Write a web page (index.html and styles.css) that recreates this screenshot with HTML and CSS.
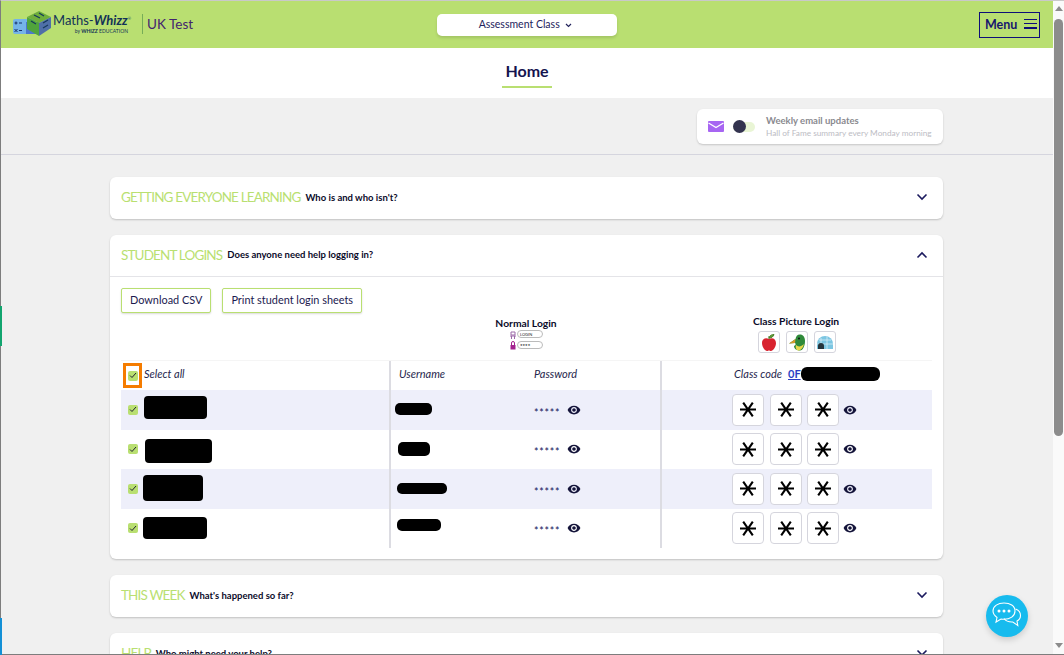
FILE: index.html
```html
<!DOCTYPE html>
<html lang="en">
<head>
    <meta charset="UTF-8">
    <title>Maths-Whizz UK Test</title>
    <link rel="stylesheet" href="styles.css">
</head>
<body>
    <div class="window">
        <span class="edge edge-green"></span>
        <span class="edge edge-blue"></span>
        <div class="page">
            <header class="topbar">
                <div class="brand">
                    <svg class="logo-mark" width="39" height="26" viewBox="0 0 39 26">
                        <rect x="0" y="8" width="22" height="15" rx="2" fill="#74b4e8"/>
                        <rect x="13" y="11" width="13" height="12" fill="#4a78cf"/>
                        <path d="M1.500 12h3M3 10.500v3M6 12h3M1.500 18l3 3M4.500 18l-3 3M6 19.500h3" stroke="#14306b" stroke-width="1" fill="none"/>
                        <path d="M14 6 L26 0 L38 6 L26 12 Z" fill="#6fae3c"/>
                        <path d="M14 6 L26 12 L26 25 L14 18 Z" fill="#50a43c"/>
                        <path d="M26 12 L38 6 L38 17 L26 25 Z" fill="#4f6fa8"/>
                        <path d="M21 4l6 3M26 2l5 3M18 10l5 3M30 12l5-3M30 17l5-3" stroke="#163a5c" stroke-width="1.300" fill="none"/>
                    </svg>
                    <div class="logo-text">
                        <div class="logo-name">Maths-<b>Whizz</b><sup>®</sup></div>
                        <div class="logo-by">by <b>WHIZZ</b> EDUCATION</div>
                    </div>
                    <div class="school">UK Test</div>
                </div>
                <button class="class-select">Assessment Class
                    <svg width="7" height="5" viewBox="0 0 7 5"><path d="M1 1l2.500 2.500L6 1" stroke="#23235c" stroke-width="1.200" fill="none"/></svg>
                </button>
                <button class="menu-button">Menu
                    <span class="burger"><i></i><i></i><i></i></span>
                </button>
            </header>

            <div class="title-bar">
                <h1>Home</h1>
            </div>

            <div class="content">
                <div class="email-row">
                    <div class="email-card">
                        <svg width="16" height="11" viewBox="0 0 16 11"><rect width="16" height="11" rx="1" fill="#a765f2"/><path d="M0.500 2l7.500 4.500L15.500 2" stroke="#fff" stroke-width="1.300" fill="none"/></svg>
                        <span class="toggle"><span class="toggle-knob"></span></span>
                        <div class="email-text">
                            <div class="email-title">Weekly email updates</div>
                            <div class="email-sub">Hall of Fame summary every Monday morning</div>
                        </div>
                    </div>
                </div>

                <div class="panels">
                    <section class="panel">
                        <div class="panel-head">
                            <span class="panel-title">GETTING EVERYONE LEARNING</span>
                            <span class="panel-question">Who is and who isn't?</span>
                            <svg class="chevron" width="12" height="8" viewBox="0 0 12 8"><path d="M1.500 1.500L6 6l4.500-4.500" stroke="#1b1a5e" stroke-width="1.600" fill="none"/></svg>
                        </div>
                    </section>

                    <section class="panel">
                        <div class="panel-head panel-head-open">
                            <span class="panel-title">STUDENT LOGINS</span>
                            <span class="panel-question">Does anyone need help logging in?</span>
                            <svg class="chevron" width="12" height="8" viewBox="0 0 12 8"><path d="M1.500 6.500L6 2l4.500 4.500" stroke="#1b1a5e" stroke-width="1.600" fill="none"/></svg>
                        </div>
                        <div class="panel-body">
                            <div class="actions">
                                <button class="outline-button">Download CSV</button>
                                <button class="outline-button">Print student login sheets</button>
                            </div>

                            <div class="login-heads">
                                <div class="login-spacer"></div>
                                <div class="login-head login-head-normal">
                                    <div class="login-name">Normal Login</div>
                                    <svg width="34" height="20" viewBox="0 0 34 20">
                                        <path d="M2 2h4v3H2zM1 6h6M2.500 6v3M5.500 6v3" stroke="#9c6aa8" fill="none"/>
                                        <rect x="8.500" y="0.500" width="25" height="7" rx="3.500" fill="#fff" stroke="#bbb"/>
                                        <text x="11" y="6" class="mini-text">LOGIN</text>
                                        <rect x="1.500" y="15" width="5" height="4.500" fill="#a3228f"/>
                                        <path d="M2.500 15v-2a1.500 1.500 0 013 0v2" stroke="#a3228f" fill="none"/>
                                        <rect x="8.500" y="11.500" width="25" height="7" rx="3.500" fill="#fff" stroke="#bbb"/>
                                        <text x="11" y="18" class="mini-text mini-stars">****</text>
                                    </svg>
                                </div>
                                <div class="login-head">
                                    <div class="login-name">Class Picture Login</div>
                                    <div class="mini-tiles">
                                        <span class="mini-tile">
                                            <svg width="16" height="17" viewBox="0 0 16 17">
                                                <path d="M8 5C5 3 1 4.500 1 9c0 4 3 8 5 8 1 0 1.500-.5 2-.5s1 .5 2 .5c2 0 5-4 5-8 0-4.500-4-6-7-4z" fill="#d8232f"/>
                                                <path d="M8 5V2M8 4c1-3 3-3.500 5-3.500-.5 2-2.500 3.500-5 3.500z" stroke="#4d7f2a" fill="#5fa036"/>
                                            </svg>
                                        </span>
                                        <span class="mini-tile">
                                            <svg width="18" height="17" viewBox="0 0 18 17">
                                                <path d="M17 7c0-4-2-6.500-5-6.500S8 2.500 7.500 5L1 9.500 7 9c1 1 1 2-1 3 0 3 3 4.500 6 4.500 3 0 5-5 5-9.500z" fill="#2f8a3a"/>
                                                <path d="M7.500 5L1 9.500 7 9z" fill="#d59a2a"/>
                                                <path d="M8 11c2 2 5 2 8-1-1 4-3 6-5 6.500-2 0-4-2-3-5.500z" fill="#e9d84a"/>
                                                <circle cx="11" cy="4.500" r="1" fill="#111"/>
                                            </svg>
                                        </span>
                                        <span class="mini-tile">
                                            <svg width="18" height="14" viewBox="0 0 18 14">
                                                <path d="M1 14V9a8 8 0 0116 0v5z" fill="#7cc6e2"/>
                                                <path d="M5 3v11M11 1.500V14M1 9h16M3 5h12" stroke="#d7eef7" stroke-width=".8" fill="none"/>
                                                <path d="M2 14v-3a3 3 0 016 0v3z" fill="#24343c"/>
                                            </svg>
                                        </span>
                                    </div>
                                </div>
                            </div>

                            <div class="logins">
                                <div class="login-row login-row-top">
                                    <div class="cell cell-name">
                                        <span class="check check-focus"><svg width="8" height="7" viewBox="0 0 8 7"><path d="M1 3.500l2 2L7 1" stroke="#223" fill="none"/></svg></span>
                                        <em>Select all</em>
                                    </div>
                                    <div class="cell cell-login">
                                        <em class="col-user">Username</em>
                                        <em>Password</em>
                                    </div>
                                    <div class="cell cell-code">
                                        <em>Class code</em>
                                        <a class="class-code" href="#">0F</a>
                                        <span class="redact redact-code"></span>
                                    </div>
                                </div>

                                <div class="login-row tinted">
                                    <div class="cell cell-name">
                                        <span class="check"><svg width="8" height="7" viewBox="0 0 8 7"><path d="M1 3.500l2 2L7 1" stroke="#223" fill="none"/></svg></span>
                                        <span class="redact name-a"></span>
                                    </div>
                                    <div class="cell cell-login">
                                        <span class="col-user"><span class="redact user-a"></span></span>
                                        <span class="stars">*****</span>
                                        <svg class="eye" viewBox="0 0 24 24"><path d="M12 4.500C7 4.500 2.730 7.610 1 12c1.730 4.390 6 7.500 11 7.500s9.270-3.110 11-7.500c-1.730-4.390-6-7.500-11-7.500zM12 17c-2.760 0-5-2.240-5-5s2.240-5 5-5 5 2.240 5 5-2.240 5-5 5zm0-8c-1.660 0-3 1.340-3 3s1.340 3 3 3 3-1.340 3-3-1.340-3-3-3z"/></svg>
                                    </div>
                                    <div class="cell cell-picture">
                                        <span class="tile"><svg width="16" height="15" viewBox="0 0 20 18"><path d="M0 9h20M4 0.500l12 17M16 0.500l-12 17" stroke="#000" stroke-width="2.600"/></svg></span>
                                        <span class="tile"><svg width="16" height="15" viewBox="0 0 20 18"><path d="M0 9h20M4 0.500l12 17M16 0.500l-12 17" stroke="#000" stroke-width="2.600"/></svg></span>
                                        <span class="tile"><svg width="16" height="15" viewBox="0 0 20 18"><path d="M0 9h20M4 0.500l12 17M16 0.500l-12 17" stroke="#000" stroke-width="2.600"/></svg></span>
                                        <svg class="eye" viewBox="0 0 24 24"><path d="M12 4.500C7 4.500 2.730 7.610 1 12c1.730 4.390 6 7.500 11 7.500s9.270-3.110 11-7.500c-1.730-4.390-6-7.500-11-7.500zM12 17c-2.760 0-5-2.240-5-5s2.240-5 5-5 5 2.240 5 5-2.240 5-5 5zm0-8c-1.660 0-3 1.340-3 3s1.340 3 3 3 3-1.340 3-3-1.340-3-3-3z"/></svg>
                                    </div>
                                </div>

                                <div class="login-row">
                                    <div class="cell cell-name">
                                        <span class="check"><svg width="8" height="7" viewBox="0 0 8 7"><path d="M1 3.500l2 2L7 1" stroke="#223" fill="none"/></svg></span>
                                        <span class="redact name-b"></span>
                                    </div>
                                    <div class="cell cell-login">
                                        <span class="col-user"><span class="redact user-b"></span></span>
                                        <span class="stars">*****</span>
                                        <svg class="eye" viewBox="0 0 24 24"><path d="M12 4.500C7 4.500 2.730 7.610 1 12c1.730 4.390 6 7.500 11 7.500s9.270-3.110 11-7.500c-1.730-4.390-6-7.500-11-7.500zM12 17c-2.760 0-5-2.240-5-5s2.240-5 5-5 5 2.240 5 5-2.240 5-5 5zm0-8c-1.660 0-3 1.340-3 3s1.340 3 3 3 3-1.340 3-3-1.340-3-3-3z"/></svg>
                                    </div>
                                    <div class="cell cell-picture">
                                        <span class="tile"><svg width="16" height="15" viewBox="0 0 20 18"><path d="M0 9h20M4 0.500l12 17M16 0.500l-12 17" stroke="#000" stroke-width="2.600"/></svg></span>
                                        <span class="tile"><svg width="16" height="15" viewBox="0 0 20 18"><path d="M0 9h20M4 0.500l12 17M16 0.500l-12 17" stroke="#000" stroke-width="2.600"/></svg></span>
                                        <span class="tile"><svg width="16" height="15" viewBox="0 0 20 18"><path d="M0 9h20M4 0.500l12 17M16 0.500l-12 17" stroke="#000" stroke-width="2.600"/></svg></span>
                                        <svg class="eye" viewBox="0 0 24 24"><path d="M12 4.500C7 4.500 2.730 7.610 1 12c1.730 4.390 6 7.500 11 7.500s9.270-3.110 11-7.500c-1.730-4.390-6-7.500-11-7.500zM12 17c-2.760 0-5-2.240-5-5s2.240-5 5-5 5 2.240 5 5-2.240 5-5 5zm0-8c-1.660 0-3 1.340-3 3s1.340 3 3 3 3-1.340 3-3-1.340-3-3-3z"/></svg>
                                    </div>
                                </div>

                                <div class="login-row tinted">
                                    <div class="cell cell-name">
                                        <span class="check"><svg width="8" height="7" viewBox="0 0 8 7"><path d="M1 3.500l2 2L7 1" stroke="#223" fill="none"/></svg></span>
                                        <span class="redact name-c"></span>
                                    </div>
                                    <div class="cell cell-login">
                                        <span class="col-user"><span class="redact user-c"></span></span>
                                        <span class="stars">*****</span>
                                        <svg class="eye" viewBox="0 0 24 24"><path d="M12 4.500C7 4.500 2.730 7.610 1 12c1.730 4.390 6 7.500 11 7.500s9.270-3.110 11-7.500c-1.730-4.390-6-7.500-11-7.500zM12 17c-2.760 0-5-2.240-5-5s2.240-5 5-5 5 2.240 5 5-2.240 5-5 5zm0-8c-1.660 0-3 1.340-3 3s1.340 3 3 3 3-1.340 3-3-1.340-3-3-3z"/></svg>
                                    </div>
                                    <div class="cell cell-picture">
                                        <span class="tile"><svg width="16" height="15" viewBox="0 0 20 18"><path d="M0 9h20M4 0.500l12 17M16 0.500l-12 17" stroke="#000" stroke-width="2.600"/></svg></span>
                                        <span class="tile"><svg width="16" height="15" viewBox="0 0 20 18"><path d="M0 9h20M4 0.500l12 17M16 0.500l-12 17" stroke="#000" stroke-width="2.600"/></svg></span>
                                        <span class="tile"><svg width="16" height="15" viewBox="0 0 20 18"><path d="M0 9h20M4 0.500l12 17M16 0.500l-12 17" stroke="#000" stroke-width="2.600"/></svg></span>
                                        <svg class="eye" viewBox="0 0 24 24"><path d="M12 4.500C7 4.500 2.730 7.610 1 12c1.730 4.390 6 7.500 11 7.500s9.270-3.110 11-7.500c-1.730-4.390-6-7.500-11-7.500zM12 17c-2.760 0-5-2.240-5-5s2.240-5 5-5 5 2.240 5 5-2.240 5-5 5zm0-8c-1.660 0-3 1.340-3 3s1.340 3 3 3 3-1.340 3-3-1.340-3-3-3z"/></svg>
                                    </div>
                                </div>

                                <div class="login-row">
                                    <div class="cell cell-name">
                                        <span class="check"><svg width="8" height="7" viewBox="0 0 8 7"><path d="M1 3.500l2 2L7 1" stroke="#223" fill="none"/></svg></span>
                                        <span class="redact name-d"></span>
                                    </div>
                                    <div class="cell cell-login">
                                        <span class="col-user"><span class="redact user-d"></span></span>
                                        <span class="stars">*****</span>
                                        <svg class="eye" viewBox="0 0 24 24"><path d="M12 4.500C7 4.500 2.730 7.610 1 12c1.730 4.390 6 7.500 11 7.500s9.270-3.110 11-7.500c-1.730-4.390-6-7.500-11-7.500zM12 17c-2.760 0-5-2.240-5-5s2.240-5 5-5 5 2.240 5 5-2.240 5-5 5zm0-8c-1.660 0-3 1.340-3 3s1.340 3 3 3 3-1.340 3-3-1.340-3-3-3z"/></svg>
                                    </div>
                                    <div class="cell cell-picture">
                                        <span class="tile"><svg width="16" height="15" viewBox="0 0 20 18"><path d="M0 9h20M4 0.500l12 17M16 0.500l-12 17" stroke="#000" stroke-width="2.600"/></svg></span>
                                        <span class="tile"><svg width="16" height="15" viewBox="0 0 20 18"><path d="M0 9h20M4 0.500l12 17M16 0.500l-12 17" stroke="#000" stroke-width="2.600"/></svg></span>
                                        <span class="tile"><svg width="16" height="15" viewBox="0 0 20 18"><path d="M0 9h20M4 0.500l12 17M16 0.500l-12 17" stroke="#000" stroke-width="2.600"/></svg></span>
                                        <svg class="eye" viewBox="0 0 24 24"><path d="M12 4.500C7 4.500 2.730 7.610 1 12c1.730 4.390 6 7.500 11 7.500s9.270-3.110 11-7.500c-1.730-4.390-6-7.500-11-7.500zM12 17c-2.760 0-5-2.240-5-5s2.240-5 5-5 5 2.240 5 5-2.240 5-5 5zm0-8c-1.660 0-3 1.340-3 3s1.340 3 3 3 3-1.340 3-3-1.340-3-3-3z"/></svg>
                                    </div>
                                </div>
                            </div>
                        </div>
                    </section>

                    <section class="panel">
                        <div class="panel-head">
                            <span class="panel-title">THIS WEEK</span>
                            <span class="panel-question">What's happened so far?</span>
                            <svg class="chevron" width="12" height="8" viewBox="0 0 12 8"><path d="M1.500 1.500L6 6l4.500-4.500" stroke="#1b1a5e" stroke-width="1.600" fill="none"/></svg>
                        </div>
                    </section>

                    <section class="panel">
                        <div class="panel-head">
                            <span class="panel-title">HELP</span>
                            <span class="panel-question">Who might need your help?</span>
                            <svg class="chevron" width="12" height="8" viewBox="0 0 12 8"><path d="M1.500 1.500L6 6l4.500-4.500" stroke="#1b1a5e" stroke-width="1.600" fill="none"/></svg>
                        </div>
                    </section>
                </div>
            </div>

            <button class="chat-button">
                <svg width="30" height="28" viewBox="0 0 30 28" fill="none" stroke="#fff" stroke-width="1.100">
                    <path d="M12 1C6 1 1 4 1 9c0 3 2 5 4 6.500L4 20l5-3c1 .2 2 .3 3 .3 6 0 11-3 11-8.300S18 1 12 1z"/>
                    <path d="M23.500 7c3 1.200 5 3.500 5 6.500 0 2.500-1.500 4.500-3.500 5.500l.8 4.500-5-3.500c-3.500.2-7-1-8.800-3.500"/>
                    <circle cx="7" cy="9" r="1.500" fill="#fff" stroke="none"/>
                    <circle cx="12" cy="9" r="1.500" fill="#fff" stroke="none"/>
                    <circle cx="17" cy="9" r="1.500" fill="#fff" stroke="none"/>
                </svg>
            </button>
        </div>

        <div class="scrollbar">
            <span class="arrow arrow-up"></span>
            <span class="thumb"></span>
            <span class="arrow arrow-down"></span>
        </div>
    </div>
</body>
</html>
```

FILE: styles.css
```css
html, body {
    margin: 0;
    height: 100%;
    overflow: hidden;
}
body {
    font-family: "Lato", "Noto Sans", sans-serif;
    color: #1b1a4f;
    background-color: #f0f0f0;
}
button {
    font-family: inherit;
    cursor: pointer;
}
.window {
    position: relative;
    display: flex;
    height: 655px;
    box-sizing: border-box;
    border: 1px solid #7d7d7d;
    border-right: none;
    border-top-color: #c9c9c9;
}
.edge {
    position: absolute;
    left: -1px;
    width: 2px;
    z-index: 2;
}
.edge-green {
    top: 305px;
    height: 40px;
    background-color: #12a56f;
}
.edge-blue {
    top: 617px;
    height: 37px;
    background-color: #1390d6;
}
.page {
    position: relative;
    flex: 1;
    min-width: 0;
    overflow: hidden;
    background-color: #f0f0f0;
}
.scrollbar {
    display: flex;
    flex-direction: column;
    align-items: center;
    width: 11px;
    flex-shrink: 0;
    background-color: #fafafa;
}
.arrow {
    width: 0;
    height: 0;
    border-left: 4px solid transparent;
    border-right: 4px solid transparent;
}
.arrow-up {
    margin-top: 5px;
    border-bottom: 5px solid #8c8c8c;
}
.arrow-down {
    margin-top: auto;
    margin-bottom: 6px;
    border-top: 5px solid #8c8c8c;
}
.thumb {
    width: 9px;
    height: 417px;
    margin-top: 8px;
    border-radius: 5px;
    background-color: #8c8c8c;
}

/* top bar */
.topbar {
    position: relative;
    display: flex;
    align-items: center;
    justify-content: space-between;
    height: 47px;
    padding: 0 13px 0 12px;
    background-color: #b9df71;
}
.brand {
    display: flex;
    align-items: center;
    padding-bottom: 2px;
}
.logo-text {
    text-align: right;
    color: #123257;
}
.logo-name {
    font-size: 13px;
    line-height: 14px;
    margin-left: 1px;
}
.logo-name b {
    font-style: italic;
}
.logo-name sup {
    font-size: 4px;
}
.logo-by {
    font-size: 5px;
    line-height: 7px;
    padding-right: 3px;
}
.school {
    margin-left: 11px;
    padding-left: 4px;
    border-left: 1px solid #76ad57;
    font-size: 13.500px;
    line-height: 20px;
    color: #43246e;
}
.class-select {
    position: absolute;
    left: 436px;
    top: 13px;
    width: 180px;
    height: 22px;
    padding: 0 3px 3px 0;
    border: none;
    border-radius: 5px;
    background-color: #fff;
    box-shadow: 0 2px 3px rgba(0,0,0,0.12);
    font-size: 10.500px;
    color: #23235c;
}
.class-select svg {
    margin-left: 3px;
}
.menu-button {
    display: flex;
    align-items: center;
    gap: 6px;
    width: 61px;
    height: 26px;
    padding: 0 2px 1px 5px;
    border: 1px solid #0e0e78;
    background: none;
    font-size: 12.500px;
    font-weight: 700;
    color: #16166e;
}
.burger {
    display: flex;
    flex-direction: column;
    gap: 3px;
    margin-left: 1px;
}
.burger i {
    display: block;
    width: 13px;
    height: 1px;
    background-color: #0e0e78;
}
.burger i:last-child {
    height: 2px;
}

/* page title */
.title-bar {
    display: flex;
    justify-content: center;
    height: 50px;
    background-color: #fff;
}
.title-bar h1 {
    height: 38px;
    margin: 0;
    padding: 0 3px;
    border-bottom: 2px solid #b9df71;
    font-size: 16px;
    font-weight: 700;
    line-height: 45px;
    color: #14144f;
}

.content {
    padding-top: 11px;
}
.email-row {
    display: flex;
    justify-content: flex-end;
    height: 45px;
    padding-right: 110px;
    border-bottom: 1px solid #d5d5de;
}
.email-card {
    display: flex;
    align-items: center;
    width: 246px;
    height: 35px;
    box-sizing: border-box;
    padding-left: 11px;
    border-radius: 6px;
    background-color: #fff;
    box-shadow: 0 1px 2px rgba(0,0,0,0.18);
}
.toggle {
    display: block;
    width: 22px;
    height: 10px;
    margin: 0 11px 0 9px;
    border-radius: 5px;
    background-color: #e9f5d5;
}
.toggle-knob {
    display: block;
    width: 13px;
    height: 13px;
    margin-top: -1.500px;
    border-radius: 50%;
    background-color: #33334f;
}
.email-title {
    font-size: 9.500px;
    font-weight: 700;
    line-height: 12px;
    color: #8a8a8f;
}
.email-sub {
    font-size: 8.250px;
    line-height: 12px;
    color: #bcbcc4;
}

/* accordion panels */
.panels {
    display: flex;
    flex-direction: column;
    gap: 16px;
    width: 833px;
    margin: 22px 0 0 109px;
}
.panel {
    border-radius: 6px;
    background-color: #fff;
    box-shadow: 0 1px 2px rgba(0,0,0,0.2);
}
.panel-head {
    display: flex;
    align-items: center;
    height: 42px;
    padding: 0 15px 2px 11px;
    box-sizing: border-box;
}
.panel-head-open {
    border-bottom: 1px solid #e4e4e8;
}
.panel-title {
    margin-right: 5px;
    font-size: 13.500px;
    font-weight: 400;
    letter-spacing: -0.850px;
    color: #b9df71;
}
.panel-question {
    font-size: 9.500px;
    font-weight: 700;
    color: #0b0b2a;
}
.chevron {
    margin-left: auto;
}
.panel-body {
    padding: 11px 11px 11px;
}
.actions {
    display: flex;
    gap: 11px;
}
.outline-button {
    height: 25px;
    padding: 0 8px 2px;
    border: 1px solid #b9df71;
    border-radius: 2px;
    background-color: #fff;
    box-shadow: 0 1px 2px rgba(0,0,0,0.15);
    font-size: 10.900px;
    color: #1b1a4f;
}

.login-heads {
    display: grid;
    grid-template-columns: 268px 271px 272px;
    height: 47px;
}
.login-head {
    display: flex;
    flex-direction: column;
    align-items: center;
    padding-top: 2px;
}
.login-head-normal {
    padding: 4px 0 0 3px;
}
.login-name {
    font-size: 10.300px;
    font-weight: 700;
    line-height: 13px;
    color: #0b0b2a;
}
.mini-text {
    font-size: 4px;
    fill: #222;
}
.mini-stars {
    font-size: 6px;
    font-weight: 700;
}
.mini-tiles {
    display: flex;
    gap: 6px;
    margin: 3px 0 0 1px;
}
.mini-tile {
    display: flex;
    align-items: center;
    justify-content: center;
    width: 20px;
    height: 20px;
    border: 1px solid #d5d5dd;
    border-radius: 3px;
    background-color: #fff;
}

.login-row {
    display: grid;
    grid-template-columns: 268px 271px 272px;
    height: 39.500px;
    font-size: 11px;
}
.login-row-top {
    height: 30px;
    border-top: 1px solid #f5f5f5;
    box-sizing: border-box;
    color: #26264c;
}
.login-row-top em,
.login-row-top .class-code,
.login-row-top .redact {
    margin-bottom: 4px;
}
.tinted {
    background-color: #eeeffa;
}
.cell {
    display: flex;
    align-items: center;
}
.cell-name {
    padding-left: 7px;
}
.cell-login {
    padding-left: 8px;
    border-left: 2px solid #dcdce2;
    box-sizing: border-box;
}
.cell-picture,
.cell-code {
    border-left: 2px solid #dcdce2;
    box-sizing: border-box;
}
.cell-picture {
    gap: 5.500px;
    padding-left: 70px;
}
.cell-code {
    padding-left: 72px;
}
.col-user {
    width: 135px;
    flex-shrink: 0;
}
.check {
    position: relative;
    display: flex;
    align-items: center;
    justify-content: center;
    width: 10px;
    height: 10px;
    margin-right: 6px;
    border-radius: 2px;
    background-color: #b9df71;
}
.check-focus::after {
    content: "";
    position: absolute;
    top: -8px;
    bottom: -7px;
    left: -5px;
    right: -4px;
    border: 3px solid #f57c00;
}
.class-code {
    margin-left: 6px;
    font-weight: 700;
    color: #2a3fc4;
}
.stars {
    width: 33px;
    padding-top: 6px;
    font-size: 10.500px;
    letter-spacing: 0.800px;
    color: #14145a;
}
.eye {
    width: 14px;
    height: 14px;
    fill: #14143a;
}
.cell-picture .eye {
    margin-left: -2px;
}
.tile {
    display: flex;
    align-items: center;
    justify-content: center;
    width: 30px;
    height: 30px;
    border: 1px solid #d5d5dd;
    border-radius: 4px;
    background-color: #fff;
}

/* blacked out names */
.redact {
    display: block;
    border-radius: 4px;
    background-color: #000;
}
.redact-code {
    width: 79px;
    height: 14px;
    border-radius: 6px;
}
.name-a { width: 63px; height: 23px; margin: -4px 0 0 0; }
.name-b { width: 67px; height: 24px; margin: 3px 0 0 1px; }
.name-c { width: 60px; height: 26px; margin: -2px 0 0 -1px; }
.name-d { width: 64px; height: 22px; margin-left: -1px; }
.user-a { width: 37px; height: 12px; margin: -2px 0 0 -4px; border-radius: 5px; }
.user-b { width: 32px; height: 14px; margin-left: -1px; border-radius: 5px; }
.user-c { width: 50px; height: 11px; margin-left: -2px; border-radius: 5px; }
.user-d { width: 44px; height: 12px; margin: -7px 0 0 -2px; border-radius: 5px; }

.chat-button {
    position: absolute;
    left: 985px;
    top: 594px;
    display: flex;
    align-items: center;
    justify-content: center;
    width: 42px;
    height: 42px;
    padding: 0;
    border: none;
    border-radius: 50%;
    background-color: #17bbee;
    box-shadow: 0 3px 6px rgba(0,0,0,0.15);
}
```
